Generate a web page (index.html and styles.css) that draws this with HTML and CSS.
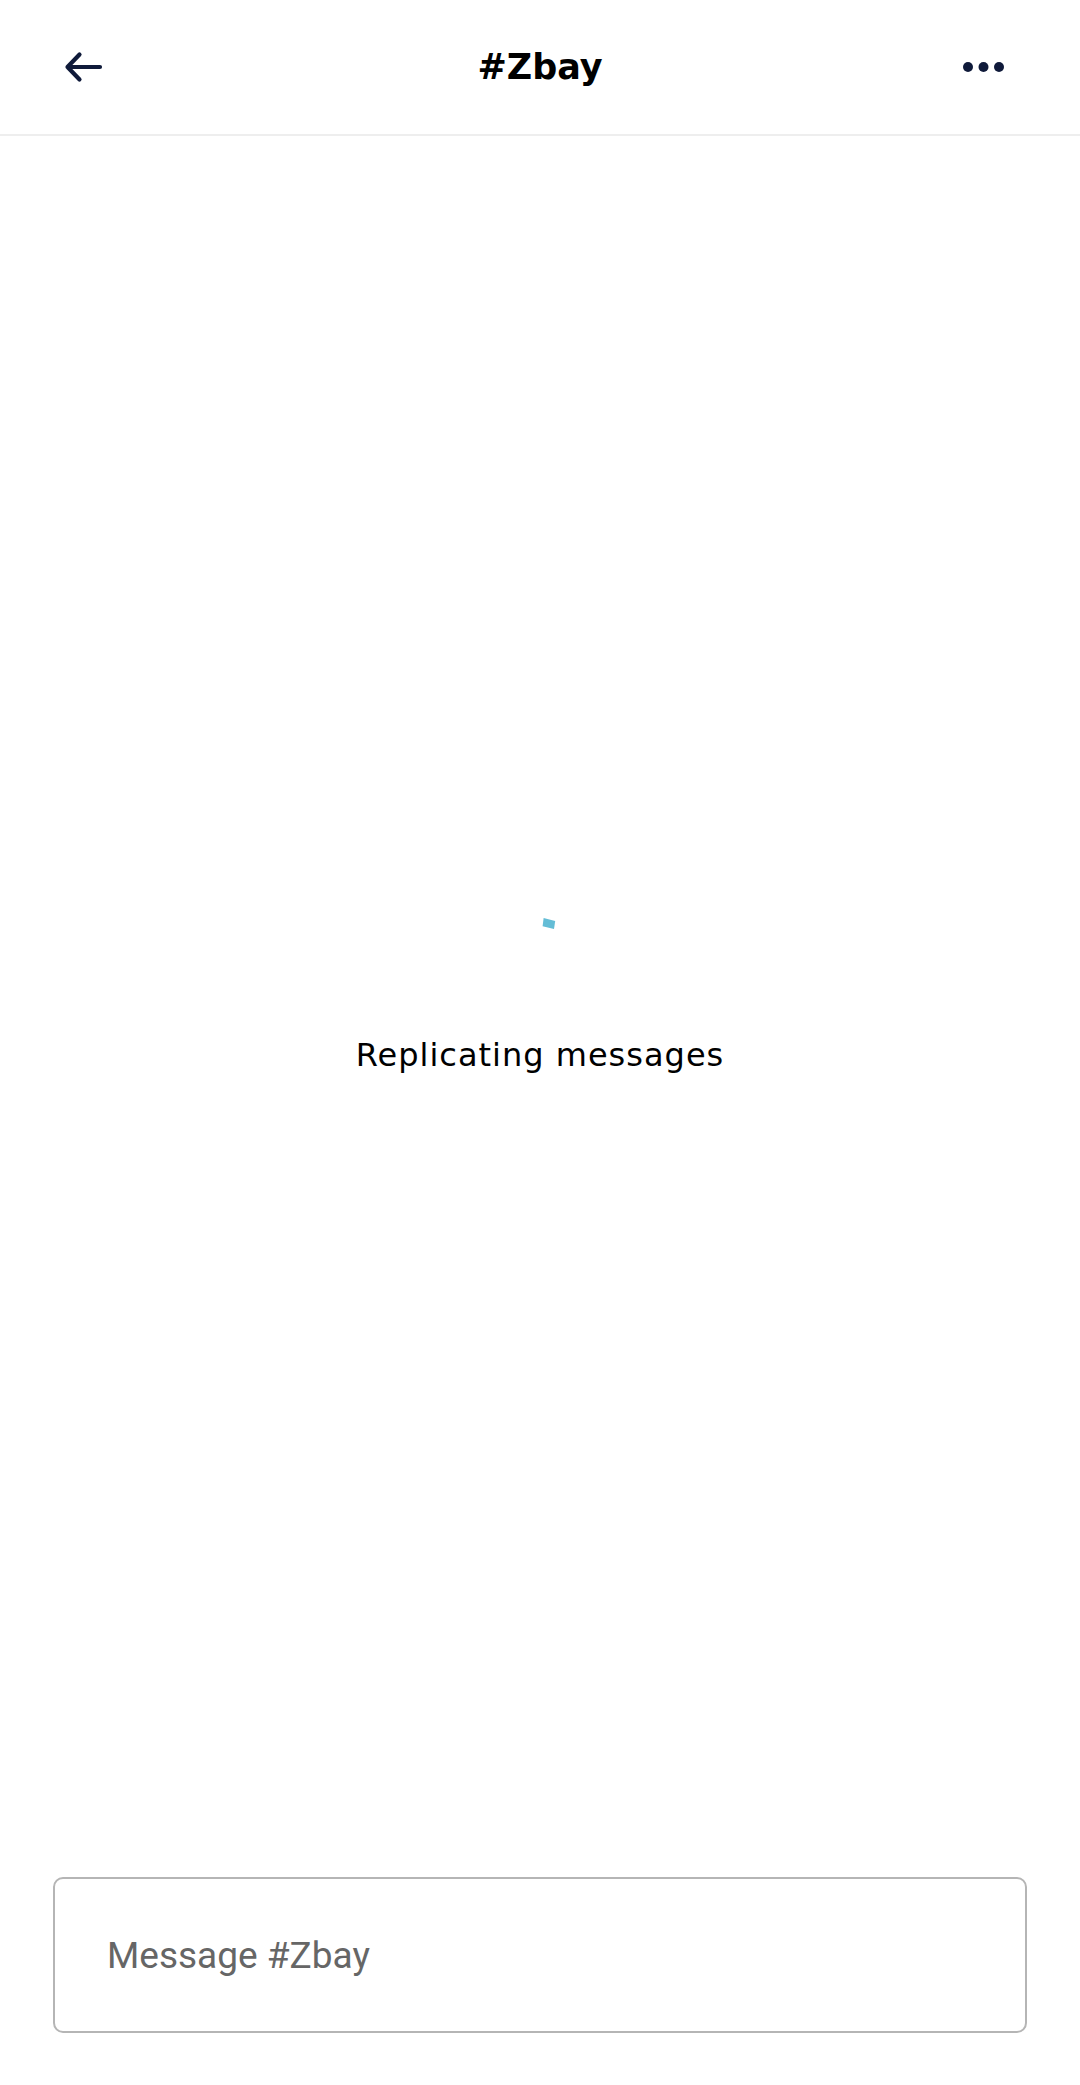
FILE: index.html
```html
<!DOCTYPE html>
<html lang="en">
<head>
<meta charset="utf-8">
<title>#Zbay</title>
<link rel="stylesheet" href="styles.css">
</head>
<body>
<div class="app">
  <header class="topbar">
    <div class="topbar-left">
      <svg class="icon-back" width="44" height="44" viewBox="0 0 44 44" aria-hidden="true">
        <path d="M39 22 H6.5 M18.5 9.5 L6.5 22 L18.5 34.5" fill="none" stroke="#0f1a3a" stroke-width="4.2" stroke-linecap="round" stroke-linejoin="round"/>
      </svg>
    </div>
    <h1 class="title">#Zbay</h1>
    <div class="topbar-right">
      <svg class="icon-more" width="44" height="44" viewBox="0 0 44 44" aria-hidden="true">
        <circle cx="7" cy="22" r="5" fill="#0f1a3a"/>
        <circle cx="22.5" cy="22" r="5" fill="#0f1a3a"/>
        <circle cx="38" cy="22" r="5" fill="#0f1a3a"/>
      </svg>
    </div>
  </header>
  <main class="content">
    <div class="loading">
      <svg class="spinner" width="60" height="60" viewBox="0 0 60 60" aria-hidden="true">
        <polygon points="33.6,2 45.2,5 44,13 32.6,10.3" fill="#64bdd6"/>
      </svg>
      <p class="loading-text">Replicating messages</p>
    </div>
  </main>
  <footer class="composer">
    <div class="input-box">
      <span class="placeholder">Message #Zbay</span>
    </div>
  </footer>
</div>
</body>
</html>
```

FILE: styles.css
```css
html, body {
  margin: 0;
  padding: 0;
  background: #ffffff;
}

.app {
  height: 2085px;
  display: flex;
  flex-direction: column;
  font-family: "DejaVu Sans", "Liberation Sans", sans-serif;
  color: #000;
}

.topbar {
  height: 134px;
  flex: 0 0 auto;
  border-bottom: 2px solid #eeeeee;
  display: grid;
  grid-template-columns: 1fr auto 1fr;
  align-items: center;
}

.topbar-left {
  padding-left: 61px;
  display: flex;
  align-items: center;
}

.topbar-right {
  justify-self: end;
  padding-right: 75px;
  display: flex;
  align-items: center;
}

.icon-back,
.icon-more {
  display: block;
}

.title {
  margin: 0;
  font-family: "DejaVu Sans", sans-serif;
  font-weight: bold;
  font-size: 35px;
  line-height: 40px;
  color: #000;
}

.content {
  flex: 1 1 auto;
  display: flex;
  align-items: center;
  justify-content: center;
  padding-bottom: 22px;
}

.loading {
  display: flex;
  flex-direction: column;
  align-items: center;
}

.spinner {
  display: block;
}

.loading-text {
  margin: 59px 0 0;
  font-size: 32px;
  line-height: 40px;
  letter-spacing: 1px;
  color: #000;
}

.composer {
  flex: 0 0 auto;
  padding: 0 53px 52px;
}

.input-box {
  height: 152px;
  border: 2px solid #b5b5b5;
  border-radius: 10px;
  display: flex;
  align-items: center;
  padding-left: 52px;
}

.placeholder {
  font-family: Roboto, "Liberation Sans", sans-serif;
  font-size: 37px;
  color: #666666;
}
```
